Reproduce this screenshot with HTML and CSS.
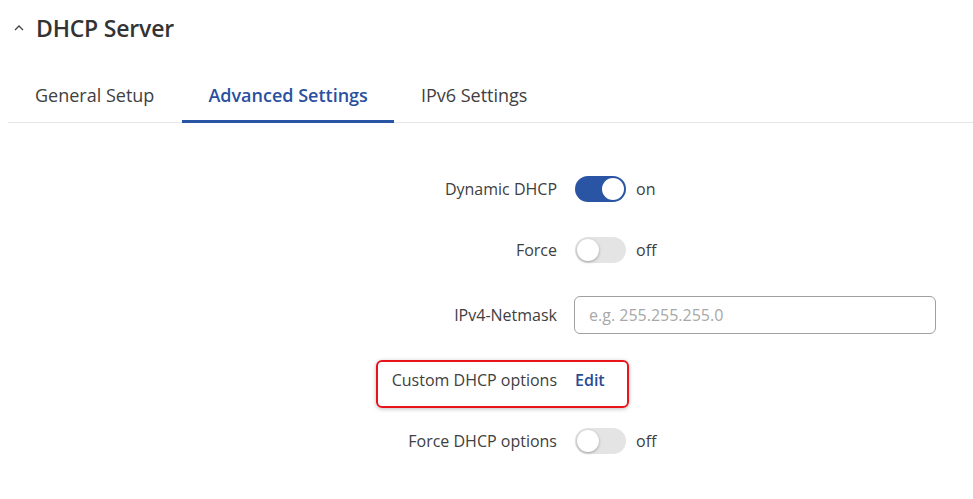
FILE: index.html
```html
<!DOCTYPE html>
<html>
<head>
<meta charset="utf-8">
<link rel="stylesheet" href="styles.css">
</head>
<body>
<div class="page">
  <div class="header">
    <svg class="chev" width="10" height="7" viewBox="0 0 10 7"><path d="M1 6 L5 2 L9 6" fill="none" stroke="#444" stroke-width="1.3"/></svg>
    <h1 class="title">DHCP Server</h1>
  </div>
  <div class="tabs">
    <div class="tab first">General Setup</div>
    <div class="tab active">Advanced Settings</div>
    <div class="tab">IPv6 Settings</div>
  </div>
  <div class="form">
    <div class="row">
      <div class="label">Dynamic DHCP</div>
      <div class="ctrl"><span class="toggle on"><span class="knob"></span></span><span class="state">on</span></div>
    </div>
    <div class="row">
      <div class="label">Force</div>
      <div class="ctrl"><span class="toggle"><span class="knob"></span></span><span class="state">off</span></div>
    </div>
    <div class="row row-input">
      <div class="label">IPv4-Netmask</div>
      <div class="ctrl"><input class="input" type="text" placeholder="e.g. 255.255.255.0"></div>
    </div>
    <div class="row row-custom">
      <div class="label">Custom DHCP options</div>
      <div class="ctrl"><a class="edit">Edit</a></div>
      <div class="highlight"></div>
    </div>
    <div class="row">
      <div class="label">Force DHCP options</div>
      <div class="ctrl"><span class="toggle"><span class="knob"></span></span><span class="state">off</span></div>
    </div>
  </div>
</div>
</body>
</html>
```
FILE: styles.css
```css
* { box-sizing: border-box; }
body {
  margin: 0;
  background: #fff;
  font-family: "Open Sans", "Noto Sans", sans-serif;
  color: #404040;
}
.page { padding: 0 0 0 8px; }
.header {
  display: flex;
  align-items: center;
  height: 56px;
  padding-left: 6px;
}
.chev { margin-right: 12px; margin-top: -2px; }
.title {
  margin: 0;
  font-size: 23px;
  font-weight: 600;
  color: #333;
  letter-spacing: -0.2px;
}
.tabs {
  display: flex;
  margin-top: 11px;
  border-bottom: 1px solid #e6e6e6;
  height: 56px;
}
.tab {
  padding: 0 27px;
  font-size: 18px;
  line-height: 56px;
  color: #404040;
  border-bottom: 3px solid transparent;
  margin-bottom: -1px;
}
.tab.first { padding-right: 28px; }
.tab.active {
  padding: 0 26px;
  color: #2a50a0;
  font-weight: 600;
  border-bottom-color: #2a55a5;
}
.form {
  display: flex;
  flex-direction: column;
  padding-top: 52px;
}
.row {
  display: flex;
  align-items: center;
  height: 28px;
  margin-bottom: 33px;
  position: relative;
}
.row-input { height: 38px; margin-bottom: 32px; margin-top: -1px; }
.row-custom { margin-bottom: 33px; }
.label {
  width: 549px;
  text-align: right;
  font-size: 16px;
  color: #404040;
}
.ctrl {
  display: flex;
  align-items: center;
  margin-left: 18px;
}
.toggle {
  position: relative;
  width: 51px;
  height: 26px;
  border-radius: 13px;
  background: #e4e4e4;
  display: inline-block;
}
.toggle.on { background: #2a55a5; }
.knob {
  position: absolute;
  top: 2px;
  left: 2px;
  width: 22px;
  height: 22px;
  border-radius: 50%;
  background: #fff;
  box-shadow: 0 1px 3px rgba(0,0,0,0.3);
}
.toggle.on .knob { left: 27px; box-shadow: none; }
.state {
  margin-left: 10px;
  font-size: 16px;
  color: #404040;
}
.input {
  width: 362px;
  height: 38px;
  border: 1px solid #a0a0a0;
  border-radius: 6px;
  padding: 0 14px;
  font-family: "Open Sans", "Noto Sans", sans-serif;
  font-size: 16px;
  color: #404040;
  margin-left: -1px;
}
.input::placeholder { color: #a8a8a8; }
.edit {
  font-size: 16px;
  font-weight: 600;
  color: #2a4c96;
}
.highlight {
  position: absolute;
  left: 368px;
  top: -6px;
  width: 253px;
  height: 48px;
  border: 2px solid #e8141c;
  border-radius: 6px;
  box-shadow: 0 1px 4px rgba(0,0,0,0.25);
  pointer-events: none;
}
```
